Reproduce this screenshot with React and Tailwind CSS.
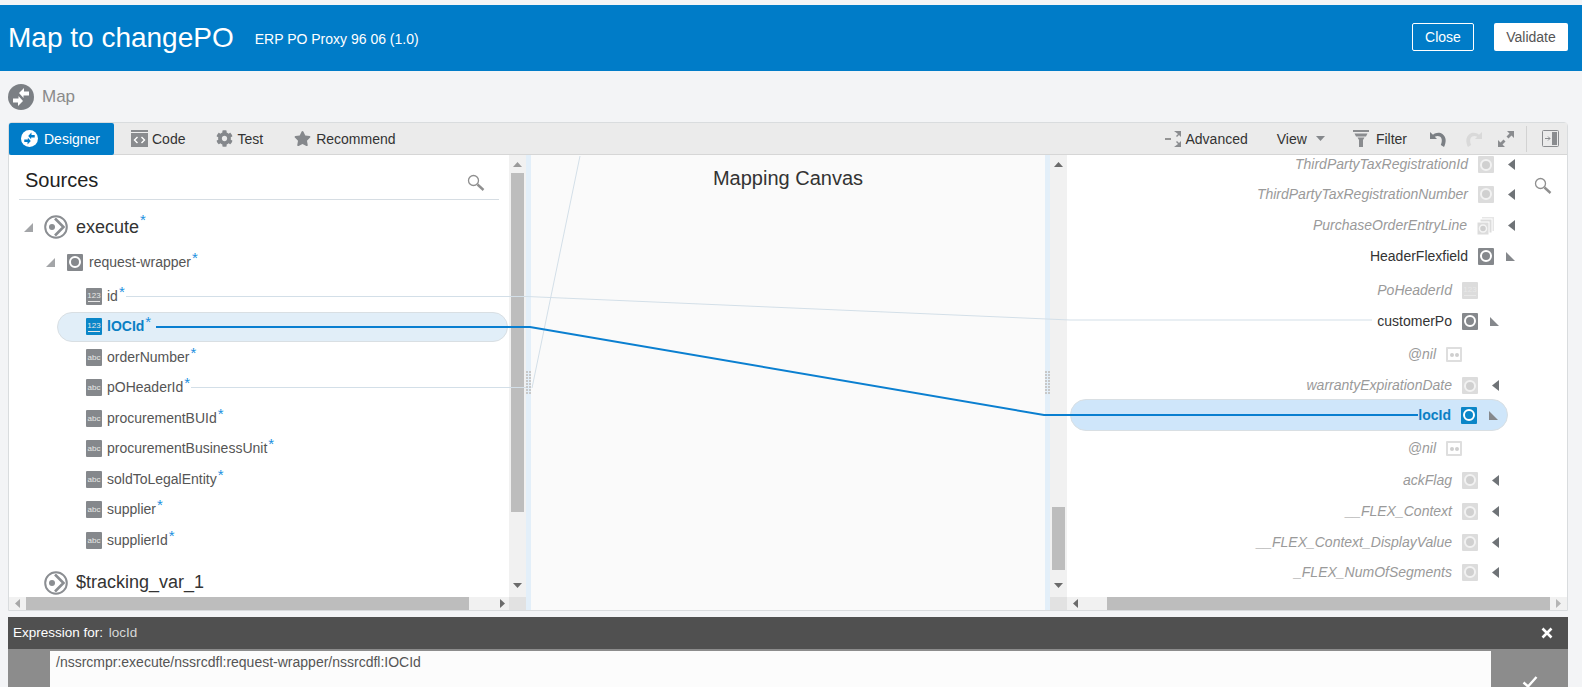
import { FaCog, FaStar } from 'react-icons/fa';

const sourceRows = [
  { name: 'id', type: '123' },
  { name: 'lOCId', type: '123', active: true },
  { name: 'orderNumber', type: 'abc' },
  { name: 'pOHeaderId', type: 'abc' },
  { name: 'procurementBUId', type: 'abc' },
  { name: 'procurementBusinessUnit', type: 'abc' },
  { name: 'soldToLegalEntity', type: 'abc' },
  { name: 'supplier', type: 'abc' },
  { name: 'supplierId', type: 'abc' },
];

const targetRows = [
  { name: 'ThirdPartyTaxRegistrationId', h: 'h-[24px] pb-[5px]', pr: 'pr-[52px]', caret: 'left', dim: true },
  { name: 'ThirdPartyTaxRegistrationNumber', h: 'h-[30px]', pr: 'pr-[52px]', caret: 'left', dim: true },
  { name: 'PurchaseOrderEntryLine', h: 'h-[31px] pt-[2px]', pr: 'pr-[52px]', caret: 'left', dim: true, stack: true },
  { name: 'HeaderFlexfield', h: 'h-[32px]', pr: 'pr-[52px]', caret: 'open' },
  { name: 'PoHeaderId', h: 'h-[33px] pt-[4px]', pr: 'pr-[89px]', icon: '123', dim: true },
  { name: 'customerPo', h: 'h-[32px]', pr: 'pr-[68px]', caret: 'open' },
  { name: '@nil', h: 'h-[31px] pt-[4px]', pr: 'pr-[105px]', icon: 'nil', dim: true },
  { name: 'warrantyExpirationDate', h: 'h-[31px] pt-[4px]', pr: 'pr-[68px]', caret: 'left', dim: true },
  { name: 'locId', h: 'h-[32px]', pr: 'pr-[68px]', caret: 'open', active: true },
  { name: '@nil', h: 'h-[33px] pt-[2px]', pr: 'pr-[105px]', icon: 'nil', dim: true },
  { name: 'ackFlag', h: 'h-[32px]', pr: 'pr-[68px]', caret: 'left', dim: true },
  { name: '__FLEX_Context', h: 'h-[31px]', pr: 'pr-[68px]', caret: 'left', dim: true },
  { name: '__FLEX_Context_DisplayValue', h: 'h-[30px]', pr: 'pr-[68px]', caret: 'left', dim: true },
  { name: '_FLEX_NumOfSegments', h: 'h-[30px]', pr: 'pr-[68px]', caret: 'left', dim: true },
];

function MapGlyph({ size = 26, bg = '#7b7f84', fg = '#fff' }) {
  return (
    <svg width={size} height={size} viewBox="0 0 26 26" className="shrink-0">
      <circle cx="13" cy="13" r="13" fill={bg} />
      <path d="M5 14.500h5.500v-2.500l4.500 5-5 5v-3.500H5z" fill={fg} />
      <path d="M21 11.500h-5.500v2.500L11 9l5-5v3.500h5z" fill={fg} />
    </svg>
  );
}

function RootIcon() {
  return (
    <svg width="24" height="24" viewBox="0 0 24 24" className="shrink-0">
      <circle cx="12" cy="12" r="10.800" fill="#fff" stroke="#8b8e92" strokeWidth="2" />
      <circle cx="8" cy="12" r="3" fill="#8b8e92" />
      <path d="M11 3.500L19.500 12 11 20.500" fill="none" stroke="#8b8e92" strokeWidth="2.600" />
    </svg>
  );
}

function TypeBox({ type, active, dim }) {
  const bg = active ? 'bg-[#0a86c8]' : dim ? 'bg-[#dcdcdc]' : 'bg-[#85888c]';
  return (
    <span className={`flex flex-col items-center justify-center w-[16px] h-[17px] shrink-0 rounded-[1px] ${bg}`}>
      <span className="text-[8px] leading-[9px] text-[#e8e8e8]">{type}</span>
      {type === '123' && <span className="w-[12px] h-[1px] bg-[#e8e8e8] mt-[1px]" />}
    </span>
  );
}

function ElementBox({ active, dim }) {
  const bg = active ? 'bg-[#0a86c8]' : dim ? 'bg-[#dcdcdc]' : 'bg-[#85888c]';
  const ring = dim ? 'border-[#f2f2f2] bg-[#d0d0d0]' : 'border-white';
  return (
    <span className={`flex items-center justify-center shrink-0 rounded-[1px] w-[16px] h-[17px] ${bg}`}>
      <span className={`w-[12px] h-[12px] rounded-full border-2 ${ring}`} />
    </span>
  );
}

function NilBox() {
  return (
    <span className="flex items-center justify-center gap-[1px] w-[16px] h-[15px] shrink-0 border-2 border-[#dedede] rounded-[1px] bg-white">
      <span className="w-[4px] h-[4px] rounded-full bg-[#cfcfcf]" />
      <span className="w-[4px] h-[4px] rounded-full bg-[#cfcfcf]" />
    </span>
  );
}

function StackBox() {
  return (
    <svg width="17" height="18" viewBox="0 0 17 18" className="shrink-0">
      <rect x="5" y="0" width="12" height="14" fill="#e6e6e6" />
      <rect x="3" y="2" width="12" height="14" fill="#dcdcdc" stroke="#fff" />
      <rect x="0" y="5" width="12" height="13" fill="#dcdcdc" stroke="#fff" />
      <circle cx="6" cy="11.500" r="3.500" fill="#cfcfcf" stroke="#f4f4f4" strokeWidth="1.500" />
    </svg>
  );
}

function LeftCaret() {
  return (
    <svg width="7" height="11" viewBox="0 0 7 11" className="shrink-0">
      <path d="M7 0v11L0 5.500z" fill="#6f7377" />
    </svg>
  );
}

// left tree opens to the lower right, the target tree mirrors it
function OpenCaret({ mirrored }) {
  return (
    <svg width="9" height="9" viewBox="0 0 9 9" className="shrink-0">
      <path d={mirrored ? 'M0 0v9h9z' : 'M9 0v9H0z'} fill={mirrored ? '#85888c' : '#a3a5a8'} />
    </svg>
  );
}

function Star() {
  return <span className="self-start text-[#1b8fe0] text-[15px] leading-[14px] ml-[1px] -mt-[1px]">*</span>;
}

function Named({ className, children }) {
  return (
    <span className="flex items-start">
      <span className={className}>{children}</span>
      <Star />
    </span>
  );
}

function SearchGlyph({ className }) {
  return (
    <svg width="18" height="17" viewBox="0 0 18 17" className={className}>
      <circle cx="6.500" cy="6.500" r="5" fill="none" stroke="#8f8f8f" strokeWidth="1.300" />
      <path d="M10.500 10.500l6 5.500" stroke="#8f8f8f" strokeWidth="2.400" />
    </svg>
  );
}

function Tab({ icon, label, className }) {
  return (
    <div className={`flex items-center gap-[5px] text-[14px] text-[#333] ${className}`}>
      {icon}
      <span className="pt-[2px]">{label}</span>
    </div>
  );
}

function VScroll({ children }) {
  return (
    <div className="flex flex-col items-center w-[17px] shrink-0 bg-[#f1f1f1]">
      {children}
    </div>
  );
}

function Arrow({ dir, color = '#6b6b6b' }) {
  const d = { up: 'M0 5L4.500 0 9 5z', down: 'M0 0h9L4.500 5z', left: 'M5 0v9L0 4.500z', right: 'M0 0v9l5-4.500z' }[dir];
  const box = dir === 'up' || dir === 'down' ? { w: 9, h: 5 } : { w: 5, h: 9 };
  return (
    <svg width={box.w} height={box.h} viewBox={`0 0 ${box.w} ${box.h}`} className="shrink-0">
      <path d={d} fill={color} />
    </svg>
  );
}

function GripDots() {
  const dots = Array.from({ length: 16 });
  return (
    <div className="grid grid-cols-2 gap-[1px] w-[5px]">
      {dots.map((_, i) => <span key={i} className="w-[2px] h-[2px] bg-[#c8c8c8]" />)}
    </div>
  );
}

function SplitBar() {
  return (
    <div className="flex items-center justify-center w-[5px] shrink-0 bg-[#e3eff9]">
      <GripDots />
    </div>
  );
}

export default function App() {
  return (
    <div className="h-screen overflow-hidden bg-[#f3f4f6] pt-[5px] font-['Liberation_Sans',Arial,sans-serif]">
      <header className="flex items-center justify-between h-[66px] bg-[#007cc8] pl-[8px] pr-[14px]">
        <div className="flex items-center">
          <h1 className="text-[28px] text-white font-normal">Map to changePO</h1>
          <span className="ml-[21px] text-[14px] text-white mt-[2px]">ERP PO Proxy 96 06 (1.0)</span>
        </div>
        <div className="flex items-center gap-[20px] -mt-[2px]">
          <button className="w-[62px] h-[28px] border border-white rounded-[2px] text-white text-[14px]">Close</button>
          <button className="w-[74px] h-[28px] bg-white rounded-[2px] text-[#555] text-[14px]">Validate</button>
        </div>
      </header>

      <div className="flex items-center gap-[8px] h-[51px] pl-[8px]">
        <MapGlyph />
        <span className="text-[17px] text-[#8a8a8a]">Map</span>
      </div>

      <div className="ml-[8px] w-[1560px] border border-[#d9dcde] rounded-t-[4px] bg-white">
        <div className="flex items-center justify-between h-[32px] bg-[#ebebeb] border-b border-[#d6d6d6]">
          <div className="flex items-center h-full">
            <Tab
              className="w-[105px] h-[32px] bg-[#007cc8] rounded-[2px] pl-[12px] !text-white !gap-[6px]"
              icon={<MapGlyph size={17} bg="#fff" fg="#007cc8" />}
              label="Designer"
            />
            <Tab
              className="ml-[17px] !gap-[4px]"
              icon={
                <svg width="17" height="17" viewBox="0 0 17 17">
                  <rect width="17" height="17" fill="#8a8c8f" />
                  <rect y="2" width="17" height="1" fill="#eee" />
                  <path d="M6.500 7l-3 3 3 3M10.500 7l3 3-3 3" stroke="#fff" strokeWidth="1.400" fill="none" />
                </svg>
              }
              label="Code"
            />
            <Tab className="ml-[31px] !gap-[4px]" icon={<FaCog size={17} color="#85888c" />} label="Test" />
            <Tab className="ml-[31px] !gap-[5px]" icon={<FaStar size={17} color="#85888c" />} label="Recommend" />
          </div>
          <div className="flex items-center h-full">
            <div className="flex items-center gap-[3px] text-[14px] text-[#333]">
              <svg width="18" height="18" viewBox="0 0 18 18">
                <path d="M0 9h6" stroke="#777" strokeWidth="1.500" />
                <path d="M9 1h7v6l-2-2-2 2-1-1 2-2z" fill="#8a8c8f" />
                <path d="M9 17h7v-6l-2 2-2-2-1 1 2 2z" fill="#8a8c8f" />
              </svg>
              <span className="pt-[2px]">Advanced</span>
            </div>
            <div className="flex items-center gap-[9px] ml-[29px] text-[14px] text-[#333]">
              <span className="pt-[2px]">View</span>
              <Arrow dir="down" color="#85888c" />
            </div>
            <div className="flex items-center gap-[7px] ml-[28px] text-[14px] text-[#333]">
              <svg width="16" height="17" viewBox="0 0 16 17">
                <path d="M0 0h16v2H0zM1.500 3.500h13l-1.500 3H3zM4.500 7.500h7L10 10v7H6v-7z" fill="#8a8c8f" />
              </svg>
              <span className="pt-[2px]">Filter</span>
            </div>
            <svg width="18" height="16" viewBox="0 0 18 16" className="ml-[23px]">
              <path d="M0 1v7h7L4.800 5.800c1.500-1 3.500-1.300 5-.3 2.200 1.300 2.700 4.500 1 8.500l3.200 2c2.500-4.800 2.300-10-1.300-12.700C9.500 1 6 1.500 3 3.700z" fill="#7b7f84" />
            </svg>
            <svg width="18" height="16" viewBox="0 0 18 16" className="ml-[16px] -scale-x-100">
              <path d="M0 1v7h7L4.800 5.800c1.500-1 3.500-1.300 5-.3 2.200 1.300 2.700 4.500 1 8.500l3.200 2c2.500-4.800 2.300-10-1.300-12.700C9.500 1 6 1.500 3 3.700z" fill="#d9d9d9" />
            </svg>
            <svg width="18" height="18" viewBox="0 0 18 18" className="ml-[15px]">
              <path d="M10 1h7v7l-2.500-2.500-3 3-2-2 3-3zM8 17H1v-7l2.500 2.500 3-3 2 2-3 3z" fill="#8a8c8f" />
            </svg>
            <span className="w-px h-[26px] bg-[#d2d2d2] ml-[11px]" />
            <svg width="17" height="17" viewBox="0 0 17 17" className="ml-[15px] mr-[8px]">
              <rect x="0.500" y="0.500" width="16" height="16" rx="1" fill="none" stroke="#8a8c8f" />
              <rect x="10" y="2" width="5" height="13" fill="#8a8c8f" />
              <path d="M3 8.500h5M6 6.500l2 2-2 2" stroke="#8a8c8f" fill="none" />
            </svg>
          </div>
        </div>

        <div className="relative flex h-[455px]">
          {/* sources */}
          <div className="flex flex-col w-[517px] shrink-0">
            <div className="flex h-[442px]">
              <div className="flex-1 overflow-hidden">
                <div className="flex items-center justify-between h-[45px] mx-[10px] border-b border-[#d6dde3] pl-[6px] pr-[14px]">
                  <span className="text-[20px] text-[#222] pt-[6px]">Sources</span>
                  <SearchGlyph className="mt-[11px]" />
                </div>
                <div className="flex items-center h-[54px] pl-[15px]">
                  <OpenCaret />
                  <span className="ml-[11px]"><RootIcon /></span>
                  <span className="ml-[8px]"><Named className="text-[18px] text-[#333]">execute</Named></span>
                </div>
                <div className="flex items-center h-[22px] pl-[37px] -mt-[3px]">
                  <OpenCaret />
                  <span className="ml-[12px]"><ElementBox /></span>
                  <span className="ml-[6px]"><Named className="text-[14px] text-[#555]">request-wrapper</Named></span>
                </div>
                <div className="mt-[8px]">
                  {sourceRows.map((r) => (
                    <div
                      key={r.name}
                      className={`flex items-center h-[30.500px] ${r.active ? 'ml-[48px] pl-[28px] mr-[1px] rounded-full bg-[#e1eef8] border border-[#d9dfe3]' : 'pl-[77px]'}`}
                    >
                      <TypeBox type={r.type} active={r.active} />
                      <span className="ml-[5px]">
                        <Named className={`text-[14px] ${r.active ? 'font-bold text-[#0a7fc4]' : 'text-[#555]'}`}>{r.name}</Named>
                      </span>
                    </div>
                  ))}
                </div>
                <div className="flex items-center h-[30px] pl-[35px] mt-[12px]">
                  <RootIcon />
                  <span className="ml-[8px] text-[18px] text-[#333]">$tracking_var_1</span>
                </div>
              </div>
              <VScroll>
                <div className="h-[18px] flex items-center"><Arrow dir="up" color="#9a9a9a" /></div>
                <div className="w-[13px] h-[339px] bg-[#bdbdbd]" />
                <div className="flex-1 flex items-end pb-[9px]"><Arrow dir="down" /></div>
              </VScroll>
            </div>
            <div className="flex items-center h-[13px] bg-[#f1f1f1]">
              <div className="flex justify-center w-[17px]"><Arrow dir="left" color="#a8a8a8" /></div>
              <div className="w-[443px] h-[13px] bg-[#bdbdbd]" />
              <div className="flex-1 flex justify-end pr-[4px]"><Arrow dir="right" /></div>
              <div className="w-[17px] h-[13px] bg-[#e2e2e2]" />
            </div>
          </div>

          <SplitBar />

          {/* canvas */}
          <div className="flex-1 bg-[#fafafa] flex justify-center pt-[11px]">
            <span className="text-[20px] leading-[24px] text-[#333]">Mapping Canvas</span>
          </div>

          <SplitBar />

          {/* targets */}
          <div className="flex flex-col w-[517px] shrink-0">
            <div className="flex h-[442px]">
              <VScroll>
                <div className="h-[18px] flex items-center"><Arrow dir="up" /></div>
                <div className="w-[13px] h-[63px] bg-[#bdbdbd] mt-[334px]" />
                <div className="flex-1 flex items-end pb-[9px]"><Arrow dir="down" /></div>
              </VScroll>
              <div className="flex-1 overflow-hidden">
                {targetRows.map((r, i) => (
                  <div
                    key={i}
                    className={`flex items-center justify-end text-[14px] ${r.h} ${r.pr} ${r.active ? 'rounded-full bg-[#cfe6fa] border border-[#d9dfe3] ml-[3px] mr-[59px] !pr-[9px]' : ''}`}
                  >
                    <span className={r.active ? 'font-bold text-[#0a7fc4]' : r.dim ? 'italic text-[#9a9a9a]' : 'text-[#333]'}>{r.name}</span>
                    <span className="ml-[10px]">
                      {r.stack ? <StackBox /> : r.icon === 'nil' ? <NilBox /> : r.icon ? <TypeBox type={r.icon} dim /> : <ElementBox active={r.active} dim={r.dim} />}
                    </span>
                    {r.caret && <span className="ml-[12px] flex justify-end w-[9px]">{r.caret === 'left' ? <LeftCaret /> : <OpenCaret mirrored />}</span>}
                  </div>
                ))}
              </div>
            </div>
            <div className="flex items-center h-[13px] bg-[#f1f1f1]">
              <div className="w-[17px] h-[13px] bg-[#e2e2e2]" />
              <div className="flex justify-center w-[17px]"><Arrow dir="left" /></div>
              <div className="w-[443px] h-[13px] bg-[#bdbdbd] ml-[23px]" />
              <div className="flex-1 flex justify-center"><Arrow dir="right" color="#b5b5b5" /></div>
            </div>
          </div>

          <SearchGlyph className="absolute left-[1525px] top-[22px]" />

          {/* connection lines sit over the panes */}
          <svg className="absolute left-0 top-0 pointer-events-none" width="1558" height="455" viewBox="0 0 1558 455">
            <path d="M117 141.500H518L1061 165H1363" fill="none" stroke="#d3dfe8" />
            <path d="M182 232.500H517" fill="none" stroke="#d3dfe8" />
            <path d="M571 1L523 233" fill="none" stroke="#d3dfe8" />
            <path d="M147 172H521L1035 260H1409" fill="none" stroke="#0a7fd0" strokeWidth="2" />
          </svg>
        </div>
      </div>

      <div className="ml-[8px] w-[1560px] mt-[6px]">
        <div className="flex items-center justify-between h-[32px] bg-[#505050] pl-[5px] pr-[15px]">
          <span className="text-[13.500px] text-white">Expression for: <span className="text-[#d8d8d8] ml-[2px]">locId</span></span>
          <svg width="12" height="12" viewBox="0 0 12 12">
            <path d="M1.500 1.500l9 9M10.500 1.500l-9 9" stroke="#fff" strokeWidth="2.600" />
          </svg>
        </div>
        <div className="flex h-[40px] bg-[#8c8c8c] pt-[2px] pl-[42px]">
          <div className="w-[1441px] bg-[#fcfcfc] pl-[6px] pt-[1px] text-[14px] text-[#555]">/nssrcmpr:execute/nssrcdfl:request-wrapper/nssrcdfl:IOCId</div>
          <div className="flex-1 flex justify-center pt-[25px]">
            <svg width="16" height="12" viewBox="0 0 16 12">
              <path d="M1.500 6.500l4.500 4L14.500 1" fill="none" stroke="#fff" strokeWidth="2.400" />
            </svg>
          </div>
        </div>
      </div>
    </div>
  );
}
